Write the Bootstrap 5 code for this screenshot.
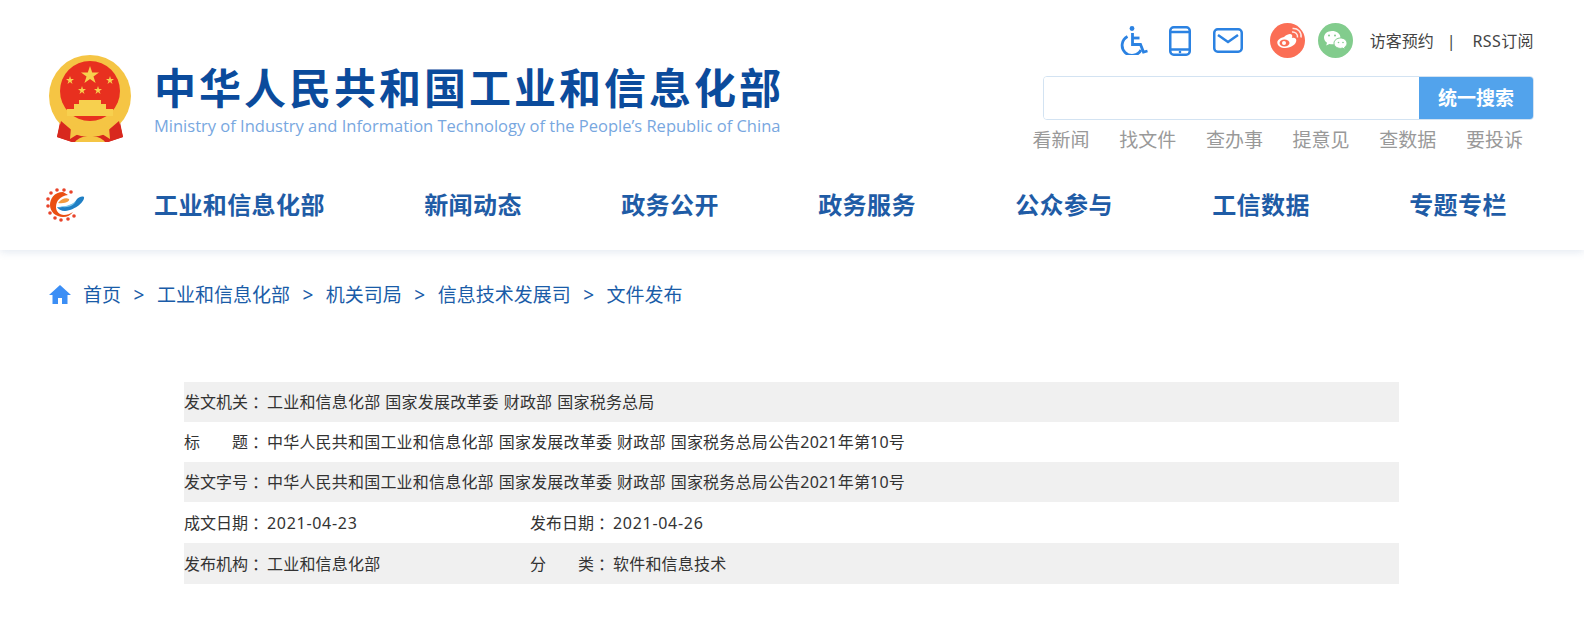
<!DOCTYPE html>
<html lang="zh-CN">
<head>
  <meta charset="UTF-8" />
  <meta name="viewport" content="width=device-width, initial-scale=1.0"/>
  <title>中华人民共和国工业和信息化部</title>
  <link href="https://cdn.jsdelivr.net/npm/bootstrap@5.3.3/dist/css/bootstrap.min.css" rel="stylesheet" />
  <style>
    body { font-family: "Noto Sans", "Noto Sans CJK SC", sans-serif; font-size: 16px; color: #333; background: #fff; }
    a { text-decoration: none; }
    .site-top { height: 250px; box-shadow: 0 2px 8px rgba(80,120,170,.16); }
    .top-band { height: 170px; padding: 23px 50px 0 48px; }
    .site-emblem { margin-top: 32px; flex: none; }
    .site-name { margin: 40px 0 0 22px; }
    .site-name-cn { font-family: "Noto Sans CJK SC", sans-serif; font-size: 42px; line-height: 46px; font-weight: 700; letter-spacing: 3px; color: #0b4b9c; white-space: nowrap; }
    .site-name-en { font-family: "Open Sans", sans-serif; font-size: 16.5px; line-height: 20px; margin-top: 7px; color: #78a7df; white-space: nowrap; }
    .tool-col { width: 491px; }
    .tool-icons { height: 35px; }
    .tool-link { color: #444; font-size: 16px; }
    .tool-rss { letter-spacing: .4px; }
    .tool-sep { margin: 0 17px 0 13px; font-size: 16px; color: #444; }
    .search-box { height: 44px; margin-top: 18px; border: 1px solid #d3e3f2; border-radius: 4px; overflow: hidden; }
    .search-box input { border: 0; outline: 0; min-width: 0; }
    .search-btn { width: 114px; border: 0; border-radius: 0; background: #52a3ec; color: #fff; font-size: 19px; font-weight: 700; padding: 0; }
    .quick-links { margin: 6px 11px 0 0; gap: 29.7px; white-space: nowrap; }
    .quick-links a { color: #999; font-size: 19px; line-height: 28px; }
    .main-nav { height: 70px; padding: 0 0 0 46px; }
    .main-nav .navbar-nav { margin-left: 69px; gap: 99.4px; }
    .main-nav .nav-link { padding: 0; font-size: 24px; font-weight: 700; letter-spacing: .4px; color: #1f5ca6; white-space: nowrap; }
    .crumb-bar { padding: 31px 48px 0 49px; height: 132px; }
    .crumb-bar .breadcrumb { --bs-breadcrumb-divider: '>'; --bs-breadcrumb-item-padding-x: 12.5px; --bs-breadcrumb-divider-color: #1a5ca8; font-size: 19px; line-height: 28px; margin: 0 0 0 12px; }
    .crumb-bar a { color: #1a5ca8; }
    .info-table { width: 1215px; margin-left: 184px; }
    .info-row { height: 40px; }
    .info-row.is-tall { height: 41px; }
    .info-row.is-grey { background: #f0f0f0; }
    .info-cell { width: 346px; flex: none; white-space: nowrap; }
    .info-label { width: 64px; flex: none; }
    .info-colon { width: 16px; flex: none; margin-right: 3px; font-family: "Noto Sans CJK TC", sans-serif; }
    .info-value { letter-spacing: .2px; word-spacing: .6px; }
    .info-date { letter-spacing: .7px; }
  </style>
</head>
<body>

<header class="site-top">
  <div class="top-band d-flex justify-content-between">
    <div class="d-flex">
      <svg class="site-emblem" width="84" height="88" viewBox="0 0 84 88">
        <path d="M13 62 L9 82 L24 87 L60 87 L75 82 L71 62 Z" fill="#d8281e"/>
        <circle cx="42" cy="41" r="41" fill="#f5c544"/>
        <circle cx="42" cy="36" r="30" fill="#e8301f"/>
        <path d="M42 11l2.200 6.500h6.800l-5.500 4 2.100 6.500-5.600-4-5.600 4 2.100-6.500-5.500-4h6.800zM22 21l1 3h3l-2.500 2 1 3-2.500-2-2.500 2 1-3-2.500-2h3zM62 21l1 3h3l-2.500 2 1 3-2.500-2-2.500 2 1-3-2.500-2h3zM34 31l1 3h3l-2.500 2 1 3-2.500-2-2.500 2 1-3-2.500-2h3zM50 31l1 3h3l-2.500 2 1 3-2.500-2-2.500 2 1-3-2.500-2h3z" fill="#f7d04e"/>
        <path d="M31 45h22v4h5v5h7v7H19v-7h7v-5h5z" fill="#f7d04e"/>
        <path d="M13 66l-4 16 15 5 3-9zM71 66l4 16-15 5-3-9z" fill="#d8281e"/>
        <path d="M42 72c-4 0-8 3-12 7l-8 5 1-12 7-2 4-3h16l4 3 7 2 1 12-8-5c-4-4-8-7-12-7z" fill="#f5c544"/>
        <path d="M27 87c3-4 9-6 15-6s12 2 15 6z" fill="#f5c544"/>
      </svg>
      <div class="site-name">
        <div class="site-name-cn">中华人民共和国工业和信息化部</div>
        <div class="site-name-en">Ministry of Industry and Information Technology of the People’s Republic of China</div>
      </div>
    </div>
    <div class="tool-col d-flex flex-column">
      <div class="tool-icons d-flex justify-content-end align-items-center">
        <svg width="28" height="29" viewBox="0 0 28 29" fill="none" stroke="#2b82e2" stroke-width="2.800" style="margin-right:21px">
          <circle cx="12" cy="2.500" r="2.400" fill="#2b82e2" stroke="none"/>
          <path d="M12.500 7v11.500h8l3 7.500 4-1"/>
          <path d="M12.500 12h7"/>
          <path d="M7.500 10.500a10 10 0 1 0 13.500 13.500"/>
        </svg>
        <svg width="22" height="30" viewBox="0 0 22 30" fill="none" stroke="#2b82e2" stroke-width="2.500" style="margin-right:22px">
          <rect x="1.250" y="1.250" width="19.500" height="27.500" rx="3.500"/>
          <path d="M1 6h20M1 23.500h20"/>
          <circle cx="11" cy="26" r="1.300" fill="#2b82e2" stroke="none"/>
        </svg>
        <svg width="30" height="25" viewBox="0 0 30 25" fill="none" stroke="#2b82e2" stroke-width="2.500" style="margin-right:27px">
          <rect x="1.250" y="1.250" width="27.500" height="22.500" rx="3.500"/>
          <path d="M5 7l10 7 10-7"/>
        </svg>
        <svg width="35" height="35" viewBox="0 0 35 35" style="margin-right:13px">
          <circle cx="17.500" cy="17.500" r="17.500" fill="#fb6e55"/>
          <path d="M14 14c4-3.500 7-3.500 8-2 .5 1 .3 2-.2 3 2.500-.7 4.500 0 4.500 2.500 0 3.500-5 7.500-11 7.500-4.500 0-8-2-8-5.500 0-2 2-4.500 6.700-5.500z" fill="#fff"/>
          <ellipse cx="14.500" cy="20" rx="5" ry="3.500" fill="#fb6e55"/>
          <circle cx="14" cy="20" r="2" fill="#fff"/>
          <path d="M22 9c3-.5 6 2 5.500 5.500M22.500 5.500c5-.7 9.500 3.500 8.500 9" fill="none" stroke="#fff" stroke-width="1.500" opacity=".85"/>
        </svg>
        <svg width="35" height="35" viewBox="0 0 35 35" style="margin-right:17px">
          <circle cx="17.500" cy="17.500" r="17.500" fill="#82cc8d"/>
          <path d="M14 8c-4.500 0-8 2.800-8 6.500 0 2.200 1.200 4 3 5.200l-.8 2.800 3.200-1.600c1 .3 2 .4 3 .4 4.500 0 8-2.800 8-6.800S18.500 8 14 8z" fill="#fff"/>
          <path d="M22.500 15c-3.600 0-6.500 2.300-6.500 5.200s2.900 5.200 6.500 5.200c.8 0 1.500-.1 2.200-.3l2.500 1.300-.6-2.200c1.500-1 2.400-2.400 2.400-4 0-2.900-2.900-5.200-6.500-5.200z" fill="#fff" stroke="#82cc8d"/>
          <circle cx="11" cy="12.500" r="1" fill="#82cc8d"/><circle cx="17" cy="12.500" r="1" fill="#82cc8d"/>
          <circle cx="20.500" cy="19.500" r=".8" fill="#82cc8d"/><circle cx="25" cy="19.500" r=".8" fill="#82cc8d"/>
        </svg>
        <a class="tool-link" href="#">访客预约</a>
        <span class="tool-sep">|</span>
        <a class="tool-link tool-rss" href="#">RSS订阅</a>
      </div>
      <form class="search-box d-flex">
        <input class="flex-grow-1" type="text" aria-label="搜索"/>
        <button class="btn search-btn" type="button">统一搜索</button>
      </form>
      <div class="quick-links d-flex justify-content-end">
        <a href="#">看新闻</a><a href="#">找文件</a><a href="#">查办事</a><a href="#">提意见</a><a href="#">查数据</a><a href="#">要投诉</a>
      </div>
    </div>
  </div>
  <nav class="navbar main-nav justify-content-start flex-nowrap">
    <svg width="39" height="34" viewBox="0 0 39 34">
      <g fill="#e8432a">
        <circle cx="5" cy="5" r="1.800"/><circle cx="11" cy="2" r="1.800"/><circle cx="18" cy="2" r="1.800"/><circle cx="25" cy="4" r="1.800"/>
        <circle cx="2" cy="11" r="1.800"/><circle cx="2" cy="18" r="1.800"/><circle cx="4" cy="25" r="1.800"/><circle cx="9" cy="30" r="1.800"/>
        <circle cx="15" cy="32" r="1.800"/><circle cx="22" cy="31" r="1.800"/><circle cx="28" cy="28" r="1.800"/>
      </g>
      <path d="M17 4C8 4 4 11 4 17c0 7 6 12 13 12 4 0 8-2 10-5-3 2-6 3-9 3-5 0-8-4-8-8 0-6 4-11 12-12z" fill="#ea4f12"/>
      <path d="M11 19c8 1 17-2 20-8 2-2 5-3 7-2 1 4-8 13-19 14-4 0-7-2-8-4z" fill="#1f7fc4"/>
      <path d="M12 15c3-4 8-6 11-4 1 2-3 5-11 4z" fill="#f39a3d"/>
      <path d="M13 18c6 1 13-1 17-5-2 5-10 8-17 5z" fill="#7cc8ec"/>
    </svg>
    <ul class="navbar-nav flex-row">
      <li class="nav-item"><a class="nav-link" href="#">工业和信息化部</a></li>
      <li class="nav-item"><a class="nav-link" href="#">新闻动态</a></li>
      <li class="nav-item"><a class="nav-link" href="#">政务公开</a></li>
      <li class="nav-item"><a class="nav-link" href="#">政务服务</a></li>
      <li class="nav-item"><a class="nav-link" href="#">公众参与</a></li>
      <li class="nav-item"><a class="nav-link" href="#">工信数据</a></li>
      <li class="nav-item"><a class="nav-link" href="#">专题专栏</a></li>
    </ul>
  </nav>
</header>

<div class="crumb-bar d-flex align-items-start">
  <svg class="mt-1" width="22" height="19" viewBox="0 0 22 19"><path d="M11 0L0 10h3.500v9h5.500v-6h4v6h5.500v-9H22z" fill="#3b8ef5"/></svg>
  <ol class="breadcrumb">
    <li class="breadcrumb-item"><a href="#">首页</a></li>
    <li class="breadcrumb-item"><a href="#">工业和信息化部</a></li>
    <li class="breadcrumb-item"><a href="#">机关司局</a></li>
    <li class="breadcrumb-item"><a href="#">信息技术发展司</a></li>
    <li class="breadcrumb-item"><a href="#">文件发布</a></li>
  </ol>
</div>

<div class="info-table">
  <div class="info-row is-grey d-flex align-items-center">
    <span class="info-label">发文机关</span><span class="info-colon">：</span><span class="info-value">工业和信息化部 国家发展改革委 财政部 国家税务总局</span>
  </div>
  <div class="info-row d-flex align-items-center">
    <span class="info-label d-flex justify-content-between"><span>标</span><span>题</span></span><span class="info-colon">：</span><span class="info-value">中华人民共和国工业和信息化部 国家发展改革委 财政部 国家税务总局公告2021年第10号</span>
  </div>
  <div class="info-row is-grey d-flex align-items-center">
    <span class="info-label">发文字号</span><span class="info-colon">：</span><span class="info-value">中华人民共和国工业和信息化部 国家发展改革委 财政部 国家税务总局公告2021年第10号</span>
  </div>
  <div class="info-row is-tall d-flex align-items-center">
    <div class="info-cell d-flex"><span class="info-label">成文日期</span><span class="info-colon">：</span><span class="info-date">2021-04-23</span></div>
    <div class="info-cell d-flex"><span class="info-label">发布日期</span><span class="info-colon">：</span><span class="info-date">2021-04-26</span></div>
  </div>
  <div class="info-row is-tall is-grey d-flex align-items-center">
    <div class="info-cell d-flex"><span class="info-label">发布机构</span><span class="info-colon">：</span><span class="info-value">工业和信息化部</span></div>
    <div class="info-cell d-flex"><span class="info-label d-flex justify-content-between"><span>分</span><span>类</span></span><span class="info-colon">：</span><span class="info-value">软件和信息技术</span></div>
  </div>
</div>

<script src="https://cdn.jsdelivr.net/npm/bootstrap@5.3.3/dist/js/bootstrap.bundle.min.js"></script>
</body>
</html>
